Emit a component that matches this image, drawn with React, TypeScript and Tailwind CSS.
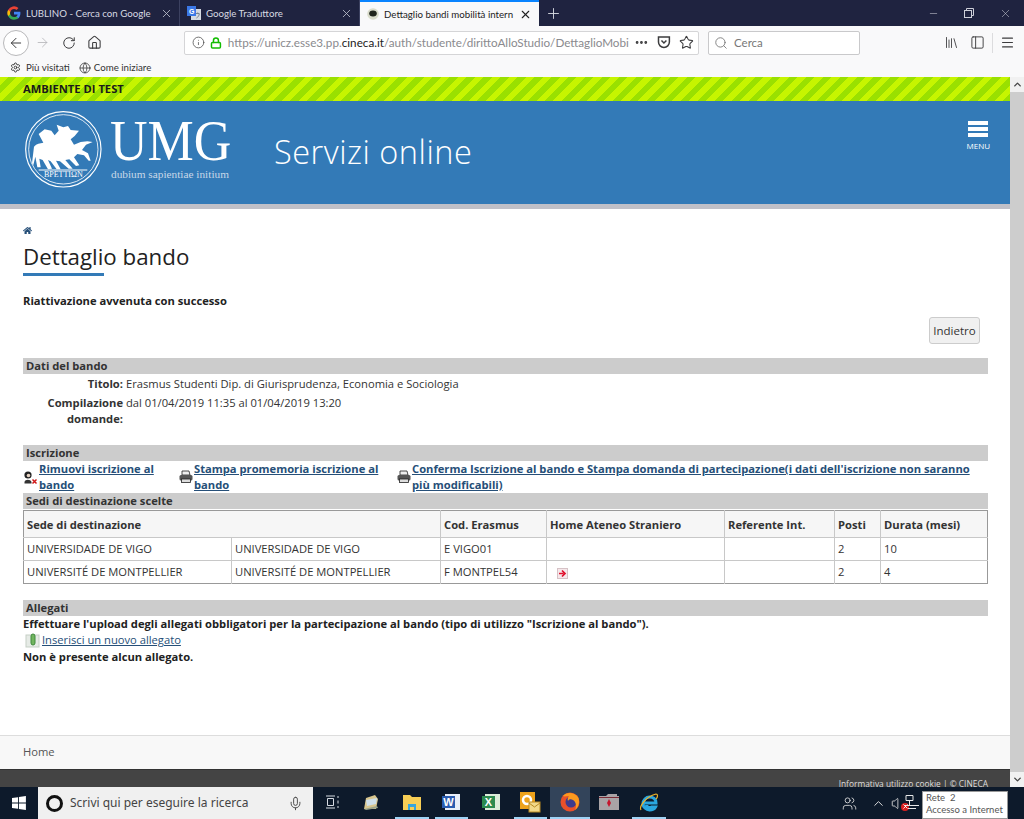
import {
  ArrowLeft,
  ArrowRight,
  ChevronDown,
  ChevronUp,
  Globe,
  Home,
  Info,
  Library,
  Lock,
  Menu,
  Mic,
  Minus,
  MoreHorizontal,
  PanelLeft,
  Plus,
  RotateCw,
  Search,
  Settings,
  Star,
  Users,
  Volume,
  X,
} from "lucide-react";
import { FaHome } from "react-icons/fa";

const GoogleIcon = () => (
  <svg width="14" height="14" viewBox="0 0 24 24" className="shrink-0">
    <path d="M23 12.3c0-.8-.1-1.600-.2-2.300H12v4.400h6.200a5.300 5.300 0 0 1-2.300 3.500v2.900h3.700c2.200-2 3.400-5 3.400-8.500z" fill="#4285f4" />
    <path d="M12 23.500c3.100 0 5.700-1 7.600-2.800l-3.700-2.900c-1 .7-2.300 1.100-3.900 1.100-3 0-5.500-2-6.400-4.700H1.800v3A11.500 11.500 0 0 0 12 23.500z" fill="#34a853" />
    <path d="M5.600 14.200a6.900 6.900 0 0 1 0-4.400v-3H1.800a11.500 11.500 0 0 0 0 10.400z" fill="#fbbc05" />
    <path d="M12 5c1.700 0 3.200.6 4.400 1.700l3.300-3.300A11.500 11.500 0 0 0 1.800 6.800l3.800 3C6.500 7 9 5 12 5z" fill="#ea4335" />
  </svg>
);

const TranslateIcon = () => (
  <svg width="14" height="14" viewBox="0 0 14 14" className="shrink-0">
    <rect x="4" y="3" width="10" height="11" fill="#d5d9e2" />
    <rect x="0" y="0" width="9" height="10" fill="#3b78e7" />
    <text x="2" y="8" fontSize="7" fill="#fff" fontFamily="Liberation Sans, sans-serif" fontWeight="700">G</text>
    <path d="M9 7.500h3.500M10.700 6.500v1M9.500 12c1.500-.8 2.500-2.300 2.800-4" stroke="#77808f" fill="none" />
  </svg>
);

const BoarFavicon = () => (
  <svg width="12" height="12" viewBox="0 0 12 12" className="shrink-0">
    <circle cx="6" cy="6" r="5.800" fill="#d9dccb" />
    <ellipse cx="6" cy="5.500" rx="3.800" ry="3" fill="#20251d" />
  </svg>
);

const UniversityLogo = () => (
  <svg width="80" height="80" viewBox="0 0 240 240" className="mb-[5px] shrink-0">
    <circle cx="118" cy="118" r="113" fill="none" stroke="#fff" strokeWidth="3.500" />
    <circle cx="118" cy="118" r="104" fill="none" stroke="#fff" strokeWidth="2.500" />
    <path
      d="M30 110C38 100 48 100 58 98L44 72L62 58L82 62L92 76L104 62L98 44L118 52L132 48L140 60L165 62L152 78L140 88L150 104L170 96L190 94L206 96L186 104L174 120L192 130L200 152L194 152L180 136L160 132L150 142L166 166L156 168L136 148L124 150L146 176L134 176L108 154L96 152L110 178L98 178L80 154L72 150L84 176L72 178L56 150L46 146L50 172L40 172L34 140L28 165L24 160Z"
      fill="#fff"
    />
    <path d="M44 180H190" stroke="#fff" strokeWidth="3" />
    <text x="118" y="201" textAnchor="middle" fontSize="24" fontFamily="'Liberation Serif', serif" fill="#fff">
      ΒΡΕΤΤΙΩΝ
    </text>
  </svg>
);

const RemoveIcon = () => (
  <svg width="15" height="15" viewBox="0 0 15 15" className="shrink-0">
    <circle cx="5" cy="5" r="3.600" fill="#222" />
    <circle cx="5.500" cy="5.500" r="1.800" fill="#e8d4c4" />
    <path d="M1.500 12c.5-3 6-3 7 0v1.500h-7z" fill="#333" />
    <path d="M9.500 9.500l4 4M13.500 9.500l-4 4" stroke="#d01818" strokeWidth="1.500" />
  </svg>
);

const PrinterIcon = () => (
  <svg width="14" height="14" viewBox="0 0 14 14" className="shrink-0">
    <path d="M3 1h7l1 4H3z" fill="#eee" stroke="#222" strokeWidth="0.800" />
    <rect x="0.500" y="5" width="13" height="5.500" rx="1.500" fill="#555" />
    <rect x="2.500" y="9" width="9" height="3.500" fill="#ddd" stroke="#222" strokeWidth="0.800" />
  </svg>
);

const AttachIcon = () => (
  <svg width="16" height="15" viewBox="0 0 16 15" className="shrink-0">
    <rect x="1" y="2" width="13" height="12" fill="#e6ebe6" stroke="#c5cfc5" />
    <rect x="6" y="1" width="4" height="11" rx="2" fill="#72b55f" stroke="#3f8a3d" />
  </svg>
);

const ExternalIcon = () => (
  <svg width="11" height="11" viewBox="0 0 11 11">
    <rect x="0.500" y="0.500" width="10" height="10" fill="#f6e7ea" stroke="#d6c2c6" />
    <path d="M2 5.500h4.500M5 2.500l3 3-3 3" stroke="#e0102c" strokeWidth="1.700" fill="none" />
  </svg>
);

const WindowsIcon = () => (
  <svg width="14" height="14" viewBox="0 0 14 14" fill="#fff">
    <path d="M0 2l6-.8V6.600H0zM6.900 1l7-1v6.600h-7zM0 7.400h6v5.400l-6-.8zM6.900 7.400h7V14l-7-1z" />
  </svg>
);

const OutlookFolder = () => (
  <svg width="18" height="18" viewBox="0 0 18 18">
    <path d="M1 16l2-11 9-3 3 4-2 10z" fill="#d8c68e" />
    <path d="M3 7l11-2-1 6-9 2z" fill="#cfe0ea" />
    <path d="M1 16l13-3 1 2-12 2z" fill="#9aa38a" />
  </svg>
);

const ExplorerIcon = () => (
  <svg width="18" height="16" viewBox="0 0 18 16">
    <path d="M0 1h7l2 2h9v13H0z" fill="#f7ce55" />
    <rect x="5" y="10" width="8" height="6" fill="#37a5dc" />
    <rect x="7" y="13" width="4" height="3" fill="#f7ce55" />
  </svg>
);

const OfficeIcon = ({ bg, letter, color }: { bg: string; letter: string; color: string }) => (
  <svg width="18" height="18" viewBox="0 0 18 18">
    <rect x="3" y="1" width="15" height="16" fill={bg} />
    <rect x="0" y="3" width="13" height="12" fill={color} />
    <text x="6.500" y="13" textAnchor="middle" fontSize="11" fontWeight="700" fill="#fff" fontFamily="'Liberation Sans', sans-serif">
      {letter}
    </text>
  </svg>
);

const OutlookIcon = () => (
  <svg width="22" height="22" viewBox="0 0 22 22">
    <rect x="1" y="1" width="15" height="17" fill="#eda21b" />
    <circle cx="8" cy="9" r="4" fill="none" stroke="#fff" strokeWidth="2.500" />
    <rect x="10" y="11" width="11" height="10" fill="#f3d98a" stroke="#b98a22" />
    <path d="M10 12l5.500 4 5.500-4" stroke="#b98a22" fill="none" />
  </svg>
);

const FirefoxIcon = () => (
  <svg width="20" height="20" viewBox="0 0 20 20">
    <circle cx="10" cy="10" r="9.500" fill="#e8502a" />
    <circle cx="11" cy="10" r="5.500" fill="#3d3a8c" />
    <path d="M3 4c3-4 11-4 15 1 2 4 1 10-3 13 2-4 1-8-2-10-2-1-4-1-5 1-1-2 0-4 1-5-2 0-5 1-6 0z" fill="#fb9a1e" />
  </svg>
);

const FolderRedIcon = () => (
  <svg width="20" height="16" viewBox="0 0 20 16">
    <path d="M0 2h7l2-2h9v2h2v14H0z" fill="#a9a4a6" />
    <path d="M0 3h20v1H0z" fill="#7b2a34" />
    <path d="M10 5l2 4-2 4-2-4z" fill="#c6162d" />
  </svg>
);

const IeIcon = () => (
  <svg width="20" height="20" viewBox="0 0 20 20">
    <path d="M3 11h14c0-4-3-6-6.500-6S4 8 4 11.500 7 18 10.500 18c3 0 5-1 6-3h-4c-2 1-5 0-5-2" fill="none" stroke="#2aa7e0" strokeWidth="3" />
    <path d="M2 18c-2-3 4-13 15-16 2 0 2 3 0 5" fill="none" stroke="#f0b429" strokeWidth="1.200" />
  </svg>
);

const BrowserTab = ({ icon, title }: { icon: React.ReactNode; title: string }) => (
  <div className="flex h-full w-[180px] items-center gap-[5px] border-r border-[#3c4160] pl-[7px] pr-[6px] text-[#d8dae2]">
    {icon}
    <span className="flex-1 whitespace-nowrap">{title}</span>
    <X size={13} strokeWidth={1.5} className="shrink-0 text-[#c3c6d2]" />
  </div>
);

const SectionBar = ({ children }: { children: React.ReactNode }) => (
  <div className="h-4 bg-[#cccccc] pl-[3px] text-[11.200px] font-bold leading-4 text-[#333]">{children}</div>
);

const ActionLink = ({ icon, width, children }: { icon: React.ReactNode; width: string; children: React.ReactNode }) => (
  <div className={`flex items-center ${width}`}>
    {icon}
    <a className="ml-px font-bold text-[#264f78] underline">{children}</a>
  </div>
);

function TaskButton({ children, open, active }: { children: React.ReactNode; open?: boolean; active?: boolean }) {
  return (
    <div className={`flex h-full w-[39.500px] ${active ? "bg-[#33445a]" : ""}`}>
      <div className={`flex flex-1 items-center justify-center border-b-2 ${active ? "" : "mx-[3px]"} ${open ? "border-[#9fd3f5]" : "border-transparent"}`}>
        {children}
      </div>
    </div>
  );
}

const th = "border-l border-[#c8c8c8] px-[3px] pt-[2px] text-left font-bold first:border-l-0";
const td = "border-l border-t border-[#c8c8c8] px-[3px] first:border-l-0";

export default function App() {
  return (
    <div className="flex h-[819px] w-[1024px] flex-col overflow-hidden bg-white font-['Open_Sans',sans-serif] text-[11.200px] text-[#222]">
      {/* tabs */}
      <div className="flex h-[26px] items-stretch bg-[#1f2340] font-['Lato',sans-serif] text-[9.700px]">
        <BrowserTab icon={<GoogleIcon />} title="LUBLINO - Cerca con Google" />
        <BrowserTab icon={<TranslateIcon />} title="Google Traduttore" />
        <div className="flex w-[179px] items-center gap-[5px] border-t-2 border-[#0a84ff] bg-[#f9f9fa] pl-[7px] pr-[7px] text-[#222]">
          <BoarFavicon />
          <span className="flex-1 whitespace-nowrap">Dettaglio bandi mobilità intern</span>
          <X size={13} strokeWidth={2} className="shrink-0" />
        </div>
        <div className="flex w-[28px] items-center justify-center text-[#d8dae2]">
          <Plus size={17} strokeWidth={1.3} />
        </div>
        <div className="ml-auto flex items-center gap-[25px] pr-[12px] text-[#cfd1da]">
          <Minus size={11} strokeWidth={1.2} />
          <svg width="10" height="10" viewBox="0 0 10 10" fill="none" stroke="currentColor">
            <rect x="0.500" y="2.500" width="7" height="7" />
            <path d="M2.500 2.500v-2h7v7h-2" />
          </svg>
          <X size={13} strokeWidth={1} />
        </div>
      </div>

      {/* toolbar */}
      <div className="flex h-[32px] items-center bg-[#f9f9fa] pt-[1px] text-[#3c3c3e]">
        <div className="ml-[3px] flex h-[26px] w-[26px] items-center justify-center rounded-full border border-[#b8b8ba] bg-white">
          <ArrowLeft size={16} strokeWidth={1.5} />
        </div>
        <ArrowRight size={15} strokeWidth={1.3} className="ml-[6px] text-[#b4b4b8]" />
        <RotateCw size={14} strokeWidth={1.7} className="ml-[12px]" />
        <Home size={15} strokeWidth={1.7} className="ml-[11px]" />
        <div className="ml-[82px] flex h-[24px] w-[515px] items-center rounded-[2px] border border-[#d5d5d7] bg-white pl-[7px] pr-[4px] font-['Lato',sans-serif]">
          <Info size={13} strokeWidth={1.5} className="text-[#555]" />
          <Lock size={12} strokeWidth={3} className="ml-[5px] text-[#12bc00]" />
          <span className="ml-[6px] w-[406px] whitespace-nowrap text-[11.700px] text-[#8a8a8e]">
            https://unicz.esse3.pp.<span className="text-[#222]">cineca.it</span>/auth/studente/dirittoAlloStudio/DettaglioMobi
          </span>
          <MoreHorizontal size={15} strokeWidth={2.5} className="ml-[4px]" />
          <svg width="14" height="13" viewBox="0 0 14 13" fill="none" stroke="#3c3c3e" strokeWidth="1.500" className="ml-[8px]">
            <path d="M1.500 1h11v5a5.500 5.500 0 0 1-11 0z" />
            <path d="M4.500 4.500L7 7l2.500-2.500" />
          </svg>
          <Star size={15} strokeWidth={1.7} className="ml-[8px]" />
        </div>
        <div className="ml-[9px] flex h-[24px] w-[152px] items-center rounded-[2px] border border-[#c9c9cb] bg-white pl-[5px] font-['Lato',sans-serif]">
          <Search size={14} strokeWidth={1.5} className="text-[#777]" />
          <span className="ml-[6px] text-[11.500px] text-[#777]">Cerca</span>
        </div>
        <Library size={15} strokeWidth={1.4} className="ml-[84px]" />
        <PanelLeft size={15} strokeWidth={1.5} className="ml-[11px]" />
        <div className="ml-[7px] h-[20px] w-px bg-[#dcdcde]" />
        <Menu size={15} strokeWidth={1.7} className="ml-[7px]" />
      </div>

      {/* bookmarks */}
      <div className="flex h-[19px] items-center bg-[#f9f9fa] pl-[10px] font-['Lato',sans-serif] text-[9.700px] text-[#333]">
        <Settings size={11} strokeWidth={2} />
        <span className="ml-[5px]">Più visitati</span>
        <Globe size={12} strokeWidth={1.5} className="ml-[9px]" />
        <span className="ml-[3px]">Come iniziare</span>
      </div>

      <div className="flex min-h-0 flex-1">
        {/* page */}
        <div className="flex min-w-0 flex-1 flex-col">
          <div className="flex h-6 items-center bg-[repeating-linear-gradient(135deg,#c6f500_0,#c6f500_6px,#9ae000_6px,#9ae000_12px)] pl-[23px] text-[11.200px] font-bold text-[#1a1a1a]">
            AMBIENTE DI TEST
          </div>

          <div className="flex h-[103px] items-center border-b-[5px] border-[#c0c0c8] bg-[#337ab7] pl-[24px] pr-[20px] text-white [box-sizing:content-box]">
            <UniversityLogo />
            <div className="ml-[6px] flex w-[130px] flex-col whitespace-nowrap">
              <span className="origin-bottom -translate-y-[3px] scale-y-[1.08] font-['Liberation_Serif',serif] text-[52px] leading-[42px]">UMG</span>
              <span className="ml-px font-['Liberation_Serif',serif] text-[11.300px] leading-[14px] text-[#c8d8e8]">dubium sapientiae initium</span>
            </div>
            <span className="ml-[34px] text-[32.500px] font-light tracking-[0.5px]">Servizi online</span>
            <div className="ml-auto flex flex-col items-center self-start pt-[20px]">
              <div className="flex w-[20px] flex-col gap-[2px]">
                <div className="h-[4px] bg-white" />
                <div className="h-[4px] bg-white" />
                <div className="h-[4px] bg-white" />
              </div>
              <span className="mt-[4px] text-[8px] leading-[10px]">MENU</span>
            </div>
          </div>

          <div className="flex min-h-0 flex-1 flex-col pl-[23px] pr-[22px]">
            <FaHome size={9} className="mt-[17px] text-[#264f78]" />
            <h1 className="mt-[6px] text-[22.300px] font-normal leading-[32px] text-[#222]">Dettaglio bando</h1>
            <div className="h-[3px] w-[81px] bg-[#337ab7]" />
            <p className="mt-[17px] font-bold leading-4">Riattivazione avvenuta con successo</p>
            <div className="mt-[8px] flex justify-end pr-[8px]">
              <button className="h-[27px] w-[51px] rounded-[3px] border border-[#ccc] bg-[#f0f0f0] text-[11.500px] text-[#333]">Indietro</button>
            </div>

            <div className="mt-[14px]">
              <SectionBar>Dati del bando</SectionBar>
              <dl className="grid grid-cols-[100px_1fr] gap-x-[3px] text-[#333]">
                <dt className="mt-[2px] text-right font-bold leading-4">Titolo:</dt>
                <dd className="mt-[2px] leading-4">Erasmus Studenti Dip. di Giurisprudenza, Economia e Sociologia</dd>
                <dt className="mt-[3px] text-right font-bold leading-4">
                  Compilazione
                  <br />
                  domande:
                </dt>
                <dd className="mt-[3px] leading-4">dal 01/04/2019 11:35 al 01/04/2019 13:20</dd>
              </dl>
            </div>

            <div className="mt-[18px]">
              <SectionBar>Iscrizione</SectionBar>
              <div className="flex h-8 leading-4">
                <ActionLink icon={<RemoveIcon />} width="w-[156px]">
                  Rimuovi iscrizione al bando
                </ActionLink>
                <ActionLink icon={<PrinterIcon />} width="w-[218px]">
                  Stampa promemoria iscrizione al bando
                </ActionLink>
                <ActionLink icon={<PrinterIcon />} width="w-[576px]">
                  Conferma Iscrizione al bando e Stampa domanda di partecipazione(i dati dell'iscrizione non saranno più modificabili)
                </ActionLink>
              </div>
              <SectionBar>Sedi di destinazione scelte</SectionBar>
              <table className="mt-px w-full table-fixed border-collapse border border-[#999] text-[#333]">
                <colgroup>
                  <col className="w-[208px]" />
                  <col className="w-[209px]" />
                  <col className="w-[106px]" />
                  <col className="w-[178px]" />
                  <col className="w-[110px]" />
                  <col className="w-[46px]" />
                  <col />
                </colgroup>
                <thead>
                  <tr className="h-[27px] bg-[#f6f6f6]">
                    <th colSpan={2} className={th}>Sede di destinazione</th>
                    <th className={th}>Cod. Erasmus</th>
                    <th className={th}>Home Ateneo Straniero</th>
                    <th className={th}>Referente Int.</th>
                    <th className={th}>Posti</th>
                    <th className={th}>Durata (mesi)</th>
                  </tr>
                </thead>
                <tbody>
                  <tr className="h-[23px]">
                    <td className={td}>UNIVERSIDADE DE VIGO</td>
                    <td className={td}>UNIVERSIDADE DE VIGO</td>
                    <td className={td}>E VIGO01</td>
                    <td className={td}></td>
                    <td className={td}></td>
                    <td className={td}>2</td>
                    <td className={td}>10</td>
                  </tr>
                  <tr className="h-[23px]">
                    <td className={td}>UNIVERSITÉ DE MONTPELLIER</td>
                    <td className={td}>UNIVERSITÉ DE MONTPELLIER</td>
                    <td className={td}>F MONTPEL54</td>
                    <td className={td}>
                      <div className="ml-[7px] mt-[2px]">
                        <ExternalIcon />
                      </div>
                    </td>
                    <td className={td}></td>
                    <td className={td}>2</td>
                    <td className={td}>4</td>
                  </tr>
                </tbody>
              </table>
            </div>

            <div className="mt-[16px] leading-[16.500px]">
              <SectionBar>Allegati</SectionBar>
              <p className="font-bold">Effettuare l'upload degli allegati obbligatori per la partecipazione al bando (tipo di utilizzo "Iscrizione al bando").</p>
              <div className="flex h-4 items-center pl-[2px]">
                <AttachIcon />
                <a className="ml-px text-[#264f78] underline">Inserisci un nuovo allegato</a>
              </div>
              <p className="font-bold">Non è presente alcun allegato.</p>
            </div>
          </div>

          <div className="flex h-[34px] items-center border-t border-[#ddd] bg-[#f8f8f8] pl-[23px] text-[#555]">Home</div>
          <div className="flex h-[18px] items-end justify-end border-t border-[#333] bg-[#444] pr-[22px] text-[8.400px] leading-[6px] text-[#ddd]">
            Informativa utilizzo cookie | © CINECA
          </div>
        </div>

        {/* scrollbar */}
        <div className="flex w-[14px] flex-col items-center bg-[#f1f1f1] text-[#444]">
          <ChevronUp size={11} strokeWidth={3} className="my-[2px]" />
          <div className="w-full flex-1 bg-[#cdcdcd]" />
          <ChevronDown size={11} strokeWidth={3} className="my-[2px]" />
        </div>
      </div>

      {/* taskbar */}
      <div className="relative flex h-[32px] items-center bg-[#0d1a2b] text-white">
        <div className="flex w-[38px] justify-center">
          <WindowsIcon />
        </div>
        <div className="flex h-full w-[275px] items-center bg-[#f0f0f0] pl-[8px] pr-[10px] text-[#444]">
          <div className="h-[17px] w-[17px] rounded-full border-[3px] border-[#111]" />
          <span className="ml-[7px] flex-1 font-['Noto_Sans',sans-serif] text-[12px]">Scrivi qui per eseguire la ricerca</span>
          <Mic size={15} strokeWidth={1.5} />
        </div>
        <TaskButton><svg width="14" height="14" viewBox="0 0 14 14" fill="none" stroke="#d6dbe2"><path d="M0 1h9M0 13h9M1.500 3.500h6v7h-6zM12 1v2M12 5.500v3M12 11v2" /></svg></TaskButton>
        <TaskButton><OutlookFolder /></TaskButton>
        <TaskButton open><ExplorerIcon /></TaskButton>
        <TaskButton open><OfficeIcon bg="#e8eef8" letter="W" color="#2a5cb0" /></TaskButton>
        <TaskButton><OfficeIcon bg="#dcecd9" letter="X" color="#2c8a4e" /></TaskButton>
        <TaskButton open><OutlookIcon /></TaskButton>
        <TaskButton open active><FirefoxIcon /></TaskButton>
        <TaskButton><FolderRedIcon /></TaskButton>
        <TaskButton open><IeIcon /></TaskButton>
        <Users size={15} strokeWidth={1.3} className="ml-auto text-[#e8e8e8]" />
        <ChevronUp size={15} strokeWidth={1.5} className="ml-[14px] text-[#e8e8e8]" />
        <div className="relative ml-[5px] mr-[118px] w-[15px]">
          <Volume size={15} strokeWidth={1.3} className="text-[#e8e8e8]" />
          <div className="absolute -right-[3px] bottom-0 flex h-[8px] w-[8px] items-center justify-center rounded-full bg-[#d92020]">
            <X size={7} strokeWidth={3} />
          </div>
        </div>
        <svg width="14" height="14" viewBox="0 0 14 14" fill="none" stroke="#e8e8e8" className="absolute left-[905px] top-[8px]">
          <path d="M1 .5h7v5H1zM4.500 5.500V10M0 10.500h14M3 13.500h8" />
        </svg>
        <div className="absolute left-[922px] top-[4px] h-[28px] w-[86px] border border-[#999] bg-white pl-[3px] font-['Lato',sans-serif] text-[9.500px] leading-[12px] text-[#555]">
          <div>Rete&nbsp; 2</div>
          <div className="whitespace-nowrap">Accesso a Internet</div>
        </div>
      </div>
    </div>
  );
}
